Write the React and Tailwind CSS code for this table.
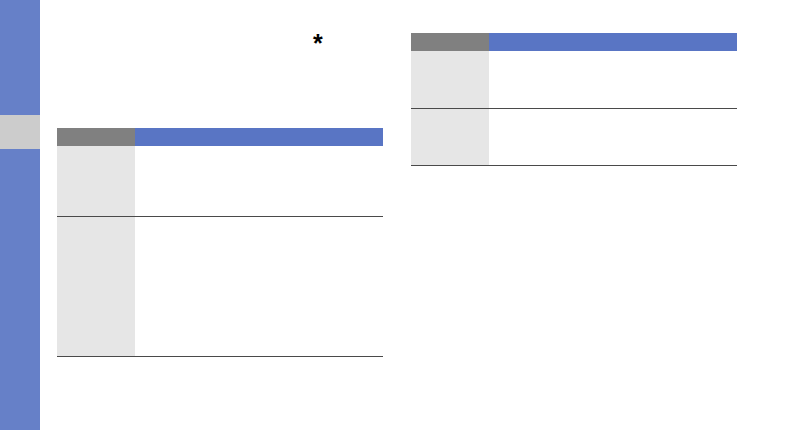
import React from "react";

function InfoTable({ rows }) {
  return (
    <div className="w-[326px]">
      {/* Header */}
      <div className="flex h-[18px]">
        <div className="w-[78px] bg-[#808080]"></div>
        <div className="flex-1 bg-[#5975c4]"></div>
      </div>
      {rows.map((h, i) => (
        <div key={i} className="flex border-b border-[#4a4a4a]" style={{ height: h }}>
          <div className="w-[78px] bg-[#e6e6e6]"></div>
          <div className="flex-1 bg-white"></div>
        </div>
      ))}
    </div>
  );
}

export default function App() {
  return (
    <div className="flex w-[794px] h-[430px] bg-white font-['Liberation_Sans',Arial,sans-serif]">
      {/* Side tab strip */}
      <div className="w-[40px] h-full bg-[#6680c8] flex flex-col">
        <div className="mt-[115px] h-[34px] bg-[#cccccc]"></div>
      </div>

      {/* Left column */}
      <div className="ml-[17px] w-[326px] flex flex-col">
        <div className="h-[128px] relative">
          <span className="absolute left-[256px] top-[31px] text-[25px] leading-[24px] font-bold text-black">
            *
          </span>
        </div>
        <InfoTable rows={[71, 140]} />
      </div>

      {/* Right column */}
      <div className="ml-[28px] pt-[33px]">
        <InfoTable rows={[58, 57]} />
      </div>
    </div>
  );
}
